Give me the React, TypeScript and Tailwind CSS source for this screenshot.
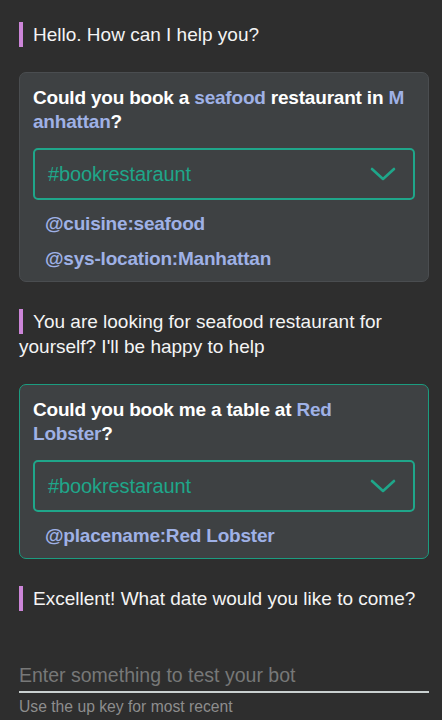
import React from "react";

type Part = { text: string; entity?: boolean };

type Turn =
  | { kind: "bot"; text: string }
  | {
      kind: "user";
      lines: Part[][];
      intent: string;
      entities: string[];
      active?: boolean;
    };

const turns: Turn[] = [
  { kind: "bot", text: "Hello. How can I help you?" },
  {
    kind: "user",
    lines: [
      [
        { text: "Could you book a " },
        { text: "seafood", entity: true },
        { text: " restaurant in " },
        { text: "M", entity: true },
      ],
      [{ text: "anhattan", entity: true }, { text: "?" }],
    ],
    intent: "#bookrestaraunt",
    entities: ["@cuisine:seafood", "@sys-location:Manhattan"],
  },
  { kind: "bot", text: "You are looking for seafood restaurant for yourself? I'll be happy to help" },
  {
    kind: "user",
    lines: [
      [{ text: "Could you book me a table at " }, { text: "Red", entity: true }],
      [{ text: "Lobster", entity: true }, { text: "?" }],
    ],
    intent: "#bookrestaraunt",
    entities: ["@placename:Red Lobster"],
    active: true,
  },
  { kind: "bot", text: "Excellent! What date would you like to come?" },
];

const Chevron = () => (
  <svg width="26" height="14" viewBox="0 0 26 14" fill="none" stroke="#1fa68a" strokeWidth={2.6} strokeLinecap="round" strokeLinejoin="round">
    <path d="M2 2l11 10L24 2" />
  </svg>
);

const BotMessage = ({ text }: { text: string }) => (
  <p className="text-[19px] leading-[25px] text-[#f4f4f4]">
    <span className="inline-block w-[4px] h-[25px] bg-[#cc85d8] align-[-6px] mr-[10px]" />
    {text}
  </p>
);

const UserCard = ({ turn }: { turn: Extract<Turn, { kind: "user" }> }) => (
  <div
    className={`rounded-[7px] border bg-[#3e4143] px-[13px] pt-[13px] pb-[4px] ${
      turn.active ? "border-[#1b9c80]" : "border-[#4a4d50]"
    }`}
  >
    <div className="text-[19px] leading-[24px] font-bold text-white tracking-[-0.2px]">
      {turn.lines.map((line, i) => (
        <div key={i} className="whitespace-nowrap">
          {line.map((p, j) => (
            <span key={j} className={p.entity ? "text-[#9fb1e6]" : ""}>
              {p.text}
            </span>
          ))}
        </div>
      ))}
    </div>
    <div className="mt-[14px] h-[52px] rounded-[5px] border-2 border-[#1fa68a] flex items-center justify-between pl-[13px] pr-[17px]">
      <span className="text-[20px] text-[#1fa68a] tracking-[-0.1px]">{turn.intent}</span>
      <Chevron />
    </div>
    <div className="mt-[7px]">
      {turn.entities.map((e) => (
        <div key={e} className="h-[35px] flex items-center pl-[12px] text-[19px] font-bold text-[#9fb1e6] tracking-[-0.2px]">
          {e}
        </div>
      ))}
    </div>
  </div>
);

export default function App() {
  return (
    <div
      className="w-[442px] h-[720px] bg-[#2e2e2e] overflow-hidden flex flex-col pl-[19px] pr-[13px]"
      style={{ fontFamily: '"Liberation Sans", Arial, sans-serif' }}
    >
      <div className="pt-[22px] flex flex-col">
        {turns.map((t, i) =>
          t.kind === "bot" ? (
            <div key={i} className={i === 0 ? "" : "mt-[27px]"}>
              <BotMessage text={t.text} />
            </div>
          ) : (
            <div key={i} className="mt-[25px]">
              <UserCard turn={t} />
            </div>
          )
        )}
      </div>

      <div className="mt-auto pb-[4px]">
        <input
          className="w-full bg-transparent outline-none text-[19.5px] leading-[24px] pb-[4px] text-white placeholder:text-[#777878] border-b-2 border-[#c9d0d0]"
          placeholder="Enter something to test your bot"
        />
        <div className="mt-[5px] text-[15.7px] leading-[18px] text-[#8d8d8d]">
          Use the up key for most recent
        </div>
      </div>
    </div>
  );
}
